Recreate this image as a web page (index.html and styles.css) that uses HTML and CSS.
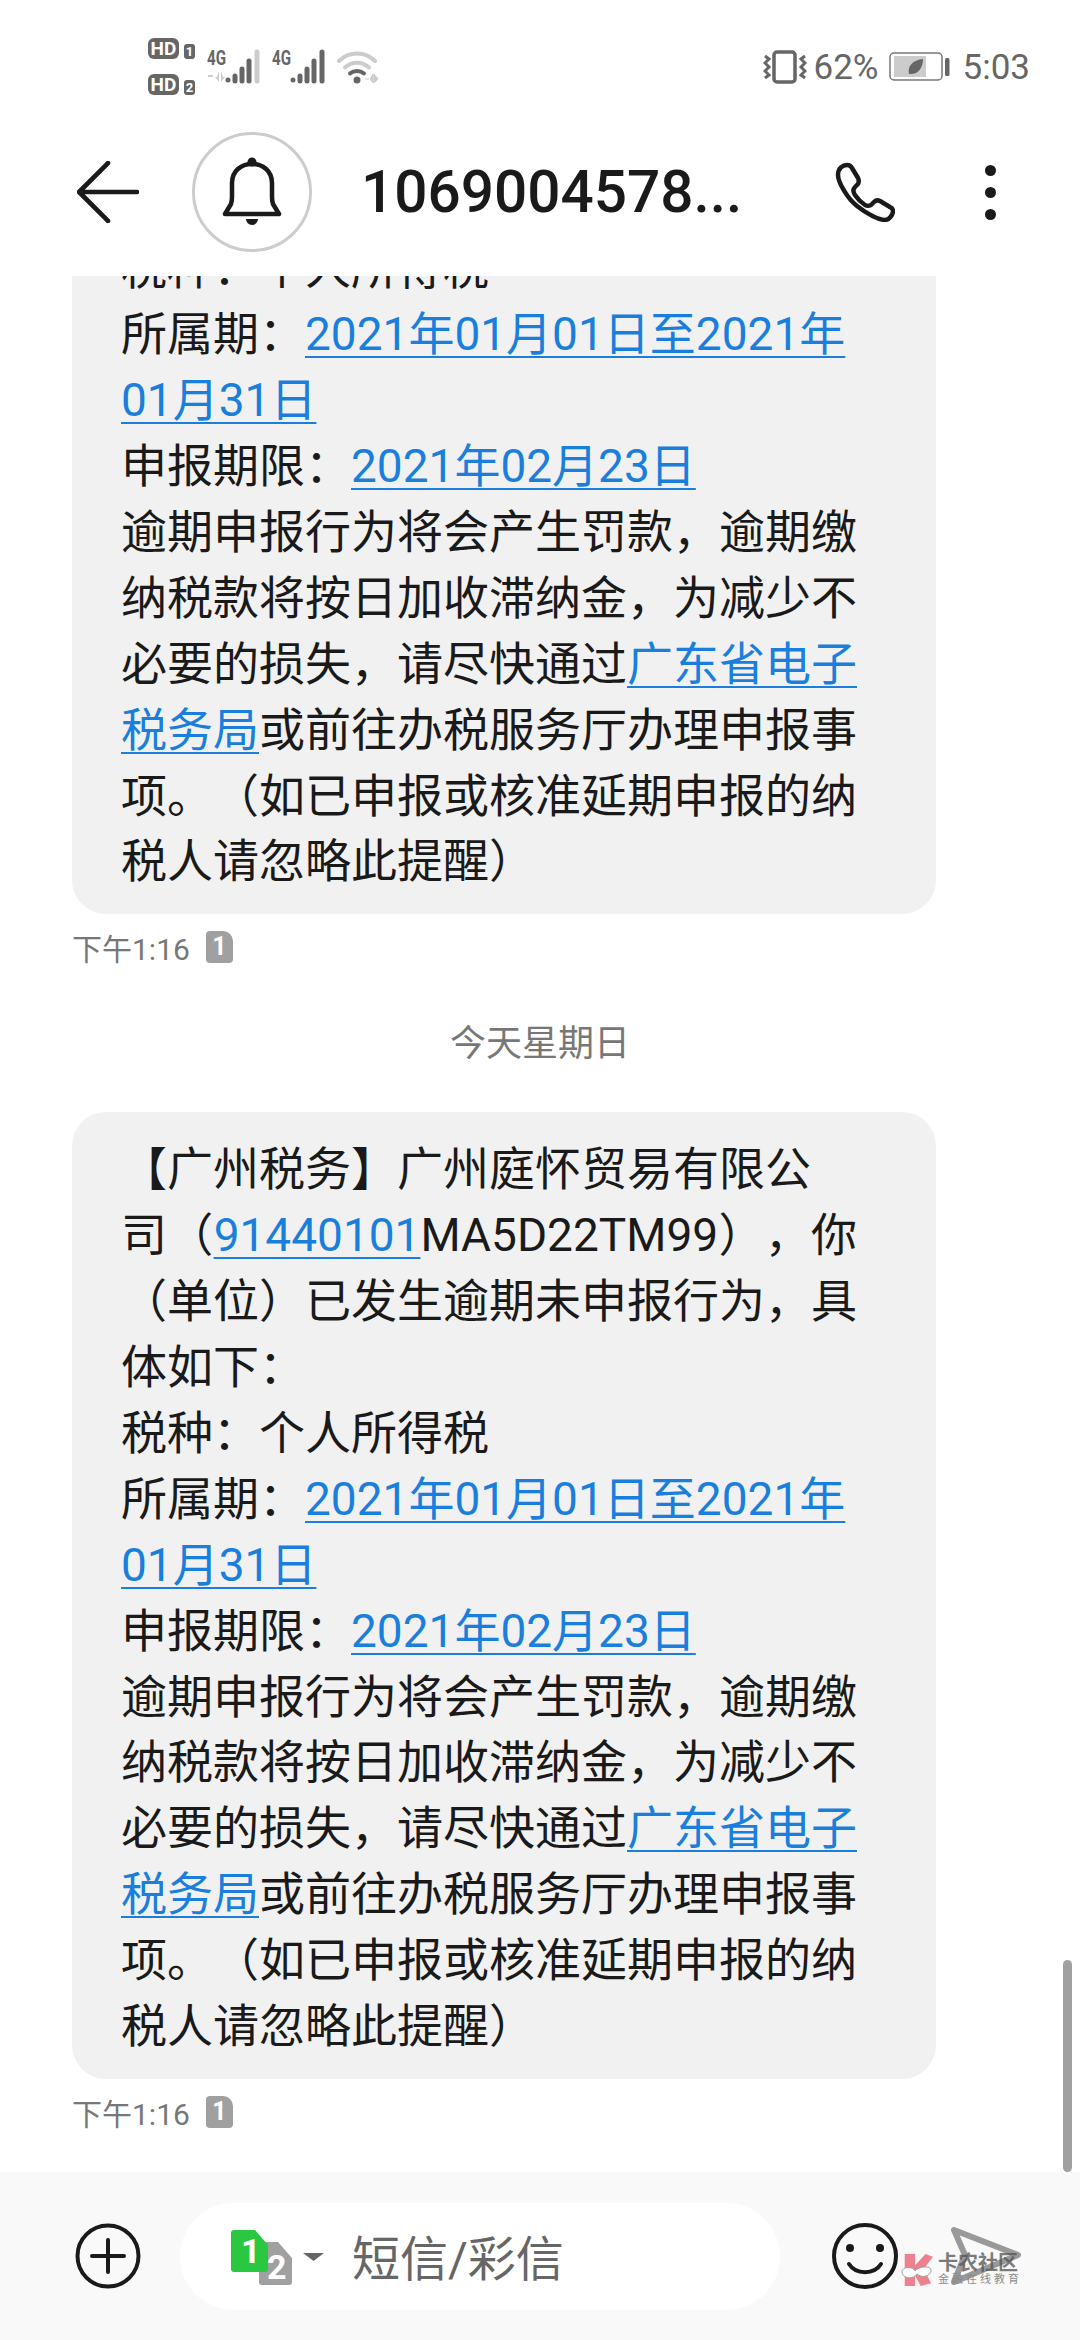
FILE: index.html
```html
<!DOCTYPE html>
<html lang="zh-CN">

<head>
	<meta charset="utf-8">
	<title>1069004578</title>
	<link rel="stylesheet" href="styles.css">
</head>

<body>
	<div class="statusbar">
		<div class="hd-col">
			<div class="hd-row"><span class="hd">HD</span><span class="hd-n">1</span></div>
			<div class="hd-row"><span class="hd">HD</span><span class="hd-n">2</span></div>
		</div>
		<svg class="sig" viewBox="0 -4 54 38">
			<text class="sig-t" x="0" y="15" textLength="19" lengthAdjust="spacingAndGlyphs">4G</text>
			<path d="M1 25h5v2h-5zM12 21v11l-4-5h2zM14 21v11l4-5h-2z" fill="#ccc" />
			<g stroke="#666" stroke-width="5" stroke-linecap="round">
				<path d="M21 30v0M28 26v5M35 19v12M42 11v20" />
				<path d="M50 2v29" stroke="#ccc" />
			</g>
		</svg>
		<svg class="sig" viewBox="0 -4 54 38">
			<text class="sig-t" x="0" y="15" textLength="19" lengthAdjust="spacingAndGlyphs">4G</text>
			<g stroke="#666" stroke-width="5" stroke-linecap="round">
				<path d="M21 30v0M28 26v5M35 19v12M42 11v20M50 2v29" />
			</g>
		</svg>
		<svg class="wifi" viewBox="0 0 42 34">
			<g fill="none" stroke-width="4" stroke-linecap="round">
				<path d="M2 11C12 1 28 1 38 11" stroke="#ccc" />
				<path d="M8 17.500C15 11 25 11 32 17.500" stroke="#ccc" />
				<path d="M13 23.500C17 20 23 20 27 23.500" stroke="#666" />
			</g>
			<circle cx="20" cy="30" r="3.500" fill="#666" />
			<path d="M28 29h4M36 24v9l-3-4zM37 24v9l4-4z" fill="#ccc" stroke="#ccc" stroke-width="1" />
		</svg>
		<div class="status-right">
			<svg class="vib" viewBox="0 0 44 34">
				<rect x="11" y="2" width="21" height="30" rx="3" fill="none" stroke="#666" stroke-width="3.500" />
				<path d="M2 6l4 3-4 4 4 4-4 4 4 4-4 3M42 6l-4 3 4 4-4 4 4 4-4 4 4 3" fill="none" stroke="#666" stroke-width="3" />
			</svg>
			<span class="pct">62%</span>
			<svg class="batt" viewBox="0 0 62 30">
				<rect x="1" y="1" width="52" height="27" rx="4" fill="none" stroke="#777" stroke-width="1.500" />
				<rect x="5" y="4" width="32" height="21" fill="#ccc" />
				<path d="M20 22C18 14 24 8 34 7C34 16 29 23 20 22Z" fill="#666" />
				<rect x="56" y="6" width="4.500" height="18" rx="1.500" fill="#666" />
			</svg>
			<span class="clock">5:03</span>
		</div>
	</div>

	<div class="header">
		<svg class="back" viewBox="0 0 60 60">
			<path d="M30 2L2 30L30 58M2 30H58" fill="none" stroke="#1a1a1a" stroke-width="4.500" stroke-linecap="round" stroke-linejoin="round" />
		</svg>
		<div class="avatar">
			<svg class="bell" viewBox="0 0 60 70">
				<path d="M3 57L9 47Q10 44 10 40V26C10 14 19 7 30 7C41 7 50 14 50 26V40Q50 44 51 47L57 57Z" fill="none" stroke="#1a1a1a" stroke-width="4.500" stroke-linejoin="round" />
				<circle cx="30" cy="5" r="4.500" fill="#1a1a1a" />
				<path d="M24 62H36A6 6 0 0 1 24 62Z" fill="#1a1a1a" />
			</svg>
		</div>
		<div class="title">1069004578...</div>
		<svg class="phone" viewBox="0 0 60 60">
			<path d="M12 3C8 3 3 6 3 13C3 20 12 36 22 44C32 52 44 58 50 58C54 58 58 53 58 49C58 47 57 46 55 45L45 39C43 38 41 38 39 40L36 43C34 44 32 44 30 43C27 41 22 36 20 33C18 30 18 27 20 25L23 22C24 20 24 18 23 16L17 6C16 4 14 3 12 3Z" fill="none" stroke="#1a1a1a" stroke-width="4.500" stroke-linejoin="round" />
		</svg>
		<div class="dots"><i></i><i></i><i></i></div>
	</div>

	<div class="list">
		<div class="msg">
			<div class="bubble">
				<div class="ln">税种：个人所得税</div>
				<div class="ln">所属期：<a>2021年01月01日至2021年</a></div>
				<div class="ln"><a>01月31日</a></div>
				<div class="ln">申报期限：<a>2021年02月23日</a></div>
				<div class="ln">逾期申报行为将会产生罚款，逾期缴</div>
				<div class="ln">纳税款将按日加收滞纳金，为减少不</div>
				<div class="ln">必要的损失，请尽快通过<a>广东省电子</a></div>
				<div class="ln"><a>税务局</a>或前往办税服务厅办理申报事</div>
				<div class="ln">项。（如已申报或核准延期申报的纳</div>
				<div class="ln">税人请忽略此提醒）</div>
			</div>
			<div class="meta"><span>下午1:16</span><span class="sim">1</span></div>
		</div>
		<div class="date">今天星期日</div>
		<div class="msg">
			<div class="bubble">
				<div class="ln">【广州税务】广州庭怀贸易有限公</div>
				<div class="ln just">司（<a>91440101</a>MA5D22TM99），你</div>
				<div class="ln">（单位）已发生逾期未申报行为，具</div>
				<div class="ln">体如下：</div>
				<div class="ln">税种：个人所得税</div>
				<div class="ln">所属期：<a>2021年01月01日至2021年</a></div>
				<div class="ln"><a>01月31日</a></div>
				<div class="ln">申报期限：<a>2021年02月23日</a></div>
				<div class="ln">逾期申报行为将会产生罚款，逾期缴</div>
				<div class="ln">纳税款将按日加收滞纳金，为减少不</div>
				<div class="ln">必要的损失，请尽快通过<a>广东省电子</a></div>
				<div class="ln"><a>税务局</a>或前往办税服务厅办理申报事</div>
				<div class="ln">项。（如已申报或核准延期申报的纳</div>
				<div class="ln">税人请忽略此提醒）</div>
			</div>
			<div class="meta"><span>下午1:16</span><span class="sim">1</span></div>
		</div>
		<div class="scrollbar"></div>
	</div>

	<div class="composer">
		<svg class="plus" viewBox="0 0 66 66">
			<circle cx="33" cy="33" r="30.500" fill="none" stroke="#1a1a1a" stroke-width="4" />
			<path d="M33 17V49M17 33H49" stroke="#1a1a1a" stroke-width="4" stroke-linecap="round" />
		</svg>
		<div class="input">
			<svg class="simpick" viewBox="0 0 96 56">
				<path d="M28 12H47L61 28V52Q61 55 58 55H31Q28 55 28 52Z" fill="#a0a0a0" />
				<text class="sp-t" x="36" y="49">2</text>
				<path d="M3 0H24L37 15V39Q37 42 34 42H3Q0 42 0 39V3Q0 0 3 0Z" fill="#2ac840" />
				<text class="sp-t" x="10" y="33">1</text>
				<path d="M72 23H93L82.500 31Z" fill="#666" />
			</svg>
			<span class="ph">短信/彩信</span>
		</div>
		<svg class="smile" viewBox="0 0 66 66">
			<circle cx="33" cy="33" r="31" fill="none" stroke="#1a1a1a" stroke-width="4" />
			<circle cx="18" cy="25" r="4" fill="#1a1a1a" />
			<circle cx="48" cy="25" r="4" fill="#1a1a1a" />
			<path d="M17 41C24 52 42 52 49 41" fill="none" stroke="#1a1a1a" stroke-width="4" stroke-linecap="round" />
		</svg>
		<svg class="send" viewBox="0 0 70 58">
			<path d="M3 3L67 28L3 55L14 28Z" fill="none" stroke="#999" stroke-width="6" stroke-linejoin="round" />
		</svg>
		<div class="wm">
			<svg class="wm-k" viewBox="0 0 36 36">
				<path d="M5 1H16V13L27 1L35 4L25 17L33 32L22 35L16 24V35H5Z" fill="#ee7b88" />
				<path d="M2 20C2 14 14 14 16 19C20 14 32 13 33 18C33 25 22 27 18 22C15 28 3 28 2 20Z" fill="#fff" stroke="#999" stroke-width="1" />
			</svg>
			<div class="wm-txt">
				<div class="wm-a">卡农社区</div>
				<div class="wm-b">金融在线教育</div>
			</div>
		</div>
	</div>
</body>

</html>
```

FILE: styles.css
```css
* {
	box-sizing: border-box;
}

html,
body {
	margin: 0;
	background: #fff;
}

body {
	width: 1080px;
	height: 2340px;
	display: flex;
	flex-direction: column;
	overflow: hidden;
	font-family: Roboto, "Noto Sans CJK SC", sans-serif;
	color: #1a1a1a;
	text-spacing-trim: space-all;
}

/* status bar */
.statusbar {
	height: 90px;
	flex: none;
	display: flex;
	align-items: flex-start;
	padding: 38px 0 0 148px;
}

.hd-col {
	display: flex;
	flex-direction: column;
	gap: 15px;
	width: 59px;
}

.hd-row {
	display: flex;
	align-items: flex-end;
	gap: 5px;
	height: 21px;
}

.hd {
	width: 31px;
	height: 21px;
	border-radius: 6px;
	background: #666;
	color: #fff;
	font-size: 19px;
	font-weight: 700;
	line-height: 21px;
	text-align: center;
}

.hd-n {
	width: 11px;
	height: 15px;
	border-radius: 3px;
	background: #666;
	color: #fff;
	font-size: 13px;
	font-weight: 700;
	line-height: 15px;
	text-align: center;
}

.sig {
	width: 54px;
	height: 38px;
	margin: 8px 11px 0 0;
}

.sig-t {
	font: 700 20px Roboto, sans-serif;
	fill: #666;
}

.wifi {
	width: 42px;
	height: 34px;
	margin: 12px 0 0 0;
}

.status-right {
	margin-left: auto;
	margin-top: 12px;
	padding-right: 50px;
	display: flex;
	align-items: center;
	height: 34px;
	color: #666;
	font-size: 35px;
}

.vib {
	width: 44px;
	height: 34px;
	margin-right: 7px;
}

.batt {
	width: 62px;
	height: 30px;
	margin: 0 12px 0 10px;
}

/* top bar */
.header {
	height: 186px;
	flex: none;
	display: flex;
	align-items: center;
	padding: 18px 0 0 77px;
}

.back {
	width: 62px;
	height: 62px;
}

.avatar {
	width: 120px;
	height: 120px;
	margin-left: 53px;
	border: 3px solid #ccc;
	border-radius: 50%;
	display: flex;
	align-items: center;
	justify-content: center;
}

.bell {
	width: 60px;
	height: 70px;
}

.title {
	width: 474px;
	margin-left: 49px;
	font-size: 58.500px;
	font-weight: 500;
	white-space: nowrap;
}

.phone {
	width: 60px;
	height: 60px;
}

.dots {
	margin-left: 90px;
	display: flex;
	flex-direction: column;
	gap: 11px;
}

.dots i {
	display: block;
	width: 11px;
	height: 11px;
	border-radius: 50%;
	background: #1a1a1a;
}

/* messages */
.list {
	flex: 1;
	min-height: 0;
	position: relative;
	overflow: hidden;
	display: flex;
	flex-direction: column;
	justify-content: flex-end;
	padding: 0 0 27px 72px;
}

.msg {
	flex: none;
}

.bubble {
	width: 864px;
	padding: 25px 0 19px 49px;
	background: #f1f1f1;
	border-radius: 34px;
	font-size: 46px;
	line-height: 65.9px;
}

.ln {
	white-space: nowrap;
}

.ln.just {
	width: 736px;
	text-align: justify;
	text-align-last: justify;
}

.bubble a {
	color: #1a7fdc;
	text-decoration: underline;
	text-decoration-thickness: 2px;
	text-underline-offset: 6px;
}

.meta {
	display: flex;
	align-items: center;
	gap: 16px;
	height: 66px;
	color: #777;
	font-size: 30px;
}

.sim {
	width: 27px;
	height: 32px;
	border-radius: 4px 10px 4px 4px;
	background: #a0a0a0;
	color: #fff;
	font-size: 25px;
	font-weight: 700;
	line-height: 32px;
	text-align: center;
}

.date {
	flex: none;
	height: 132px;
	padding: 34px 72px 0 0;
	color: #777;
	font-size: 36px;
	text-align: center;
}

.scrollbar {
	position: absolute;
	right: 8px;
	bottom: 0;
	width: 9px;
	height: 212px;
	border-radius: 5px;
	background: #a0a0a0;
}

/* bottom input */
.composer {
	height: 168px;
	flex: none;
	position: relative;
	display: flex;
	align-items: center;
	background: #f9f9f9;
	padding-left: 75px;
}

.plus {
	width: 66px;
	height: 66px;
}

.input {
	width: 600px;
	height: 107px;
	margin-left: 39px;
	border-radius: 54px;
	background: #fff;
	display: flex;
	align-items: center;
	padding-left: 51px;
}

.simpick {
	width: 96px;
	height: 56px;
	margin-top: 4px;
}

.sp-t {
	font: 700 34px Roboto, sans-serif;
	fill: #fff;
}

.ph {
	margin: -3px 0 0 25px;
	color: #666;
	font-size: 48px;
}

.smile {
	width: 66px;
	height: 66px;
	margin-left: 52px;
}

.send {
	width: 70px;
	height: 58px;
	margin-left: 53px;
}

.wm {
	position: absolute;
	left: 900px;
	top: 81px;
	display: flex;
	gap: 4px;
	opacity: 0.95;
}

.wm-k {
	width: 34px;
	height: 34px;
}

.wm-a {
	color: #555;
	font-size: 20px;
	font-weight: 700;
	line-height: 20px;
	white-space: nowrap;
	opacity: 0.8;
}

.wm-b {
	color: #888;
	font-size: 11px;
	letter-spacing: 3px;
	line-height: 14px;
	white-space: nowrap;
}
```
